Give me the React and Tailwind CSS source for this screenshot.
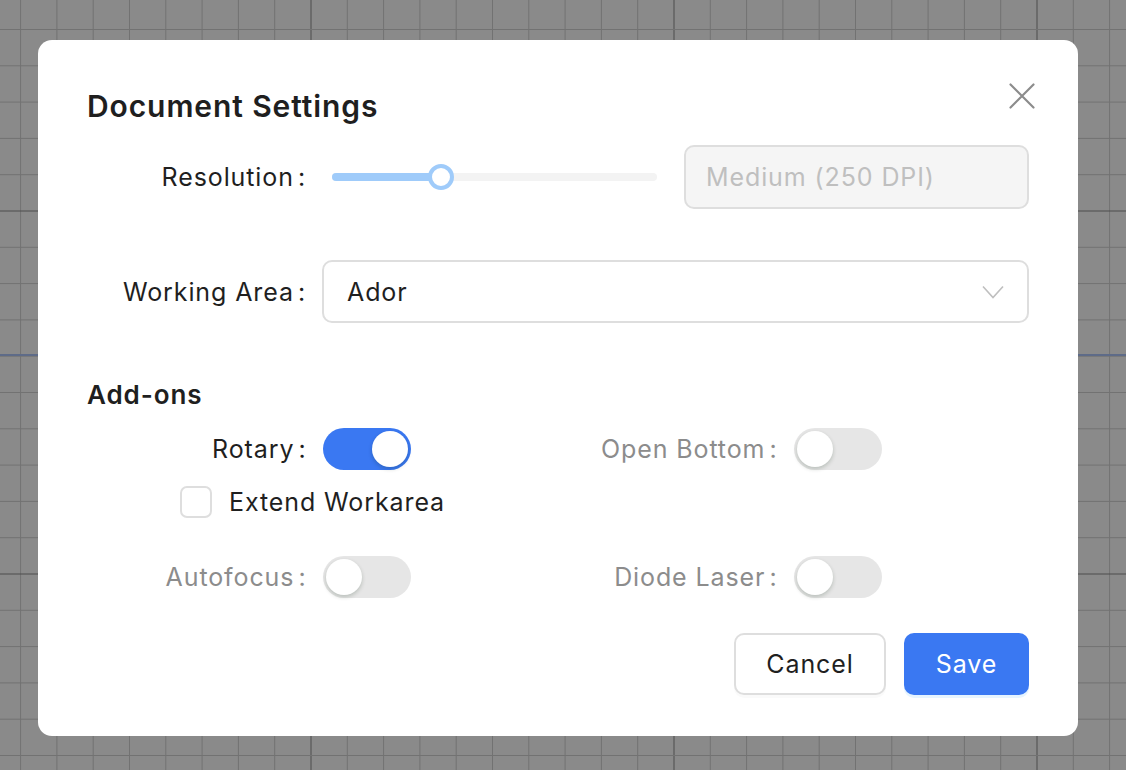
const STEP = 36.3

function GridCanvas() {
  const vertical = []
  for (let k = -9; k <= 23; k++) vertical.push({ x: 311 + k * STEP, major: k % 10 === 0 })
  const horizontal = []
  for (let k = -6; k <= 16; k++) horizontal.push({ y: 211 + k * STEP, major: k % 10 === 0 })
  return (
    <svg className="absolute inset-0" width="1126" height="770">
      <rect width="1126" height="770" fill="#8a8a8a" />
      {vertical.map((l) => (
        <line key={'v' + l.x} x1={l.x} x2={l.x} y1="0" y2="770" stroke={l.major ? '#4d4d4d' : '#727272'} strokeWidth="1" />
      ))}
      {horizontal.map((l) => (
        <line key={'h' + l.y} x1="0" x2="1126" y1={l.y} y2={l.y} stroke={l.major ? '#4d4d4d' : '#727272'} strokeWidth="1" />
      ))}
      <line x1="0" x2="1126" y1="355" y2="355" stroke="#5e6b88" strokeWidth="2" />
    </svg>
  )
}

function Label({ text, disabled, className = '' }) {
  return (
    <div className={`flex shrink-0 items-center justify-end pt-[2px] ${className} ${disabled ? 'text-[#8c8c8c]' : 'text-[#1f1f1f]'}`}>
      <span>{text}</span>
      <span className="ml-[4px] mr-[16px]">:</span>
    </div>
  )
}

function Toggle({ on }) {
  return (
    <div
      className={`flex h-[42px] w-[88px] items-center rounded-full px-[3px] ${on ? 'justify-end bg-[#3a78f2]' : 'justify-start bg-[#e6e6e6]'}`}
    >
      <div className="h-[36px] w-[36px] rounded-full bg-white shadow-[0_2px_4px_rgba(0,35,11,0.2)]" />
    </div>
  )
}

function Slider() {
  return (
    <div className="relative ml-[10px] flex h-[28px] w-[325px] items-center">
      <div className="h-[8px] w-full rounded-full bg-[#f3f3f3]" />
      <div className="absolute left-0 top-[10px] h-[8px] w-[109px] rounded-full bg-[#9fcbfa]" />
      <div className="absolute left-[96px] top-[1px] h-[26px] w-[26px] rounded-full border-[4px] border-[#9fcbfa] bg-white" />
    </div>
  )
}

export default function App() {
  return (
    <div className="relative h-[770px] w-[1126px] overflow-hidden font-['Inter',sans-serif] text-[25px] tracking-[0.9px] text-[#1f1f1f]">
      <GridCanvas />
      <div className="absolute left-[38px] top-[40px] flex h-[696px] w-[1040px] flex-col rounded-[14px] bg-white px-[49px] pt-[46px]">
        <button className="absolute right-[43px] top-[43px] text-[#8c8c8c]">
          <svg width="26" height="26" viewBox="0 0 26 26" fill="none" stroke="currentColor" strokeWidth="2.2" strokeLinecap="round">
            <path d="M1.5 1.5 L24.5 24.5 M24.5 1.5 L1.5 24.5" />
          </svg>
        </button>
        <div className="text-[30px] font-semibold leading-[40px] tracking-[0.9px]">Document Settings</div>

        <div className="mt-[19px] flex h-[64px] items-center">
          <Label text="Resolution" className="w-[235px]" />
          <Slider />
          <div className="ml-auto flex h-[64px] w-[345px] items-center rounded-[10px] border-2 border-[#dedede] bg-[#f5f5f5] px-[20px] pt-[2px] text-[#bfbfbf]">
            Medium (250 DPI)
          </div>
        </div>

        <div className="mt-[51px] flex h-[63px] items-center">
          <Label text="Working Area" className="w-[235px]" />
          <div className="flex h-[63px] flex-1 items-center justify-between rounded-[10px] border-2 border-[#dedede] bg-white pl-[23px] pr-[23px]">
            <span className="pt-[2px]">Ador</span>
            <svg width="22" height="14" viewBox="0 0 22 14" fill="none" stroke="#bfbfbf" strokeWidth="1.6">
              <path d="M1 1.5 L11 12.5 L21 1.5" />
            </svg>
          </div>
        </div>

        <div className="mt-[52px] text-[26px] font-semibold leading-[40px] tracking-[0.9px]">Add-ons</div>

        <div className="mt-[13px] grid grid-cols-2">
          <div className="flex h-[42px] items-center">
            <Label text="Rotary" className="w-1/2" />
            <Toggle on />
          </div>
          <div className="flex h-[42px] items-center">
            <Label text="Open Bottom" disabled className="w-1/2" />
            <Toggle />
          </div>
        </div>

        <div className="ml-[93px] mt-[16px] flex h-[32px] items-center">
          <div className="h-[32px] w-[32px] rounded-[7px] border-2 border-[#dedede] bg-white" />
          <span className="ml-[17px] pt-[2px]">Extend Workarea</span>
        </div>

        <div className="mt-[38px] grid grid-cols-2">
          <div className="flex h-[42px] items-center">
            <Label text="Autofocus" disabled className="w-1/2" />
            <Toggle />
          </div>
          <div className="flex h-[42px] items-center">
            <Label text="Diode Laser" disabled className="w-1/2" />
            <Toggle />
          </div>
        </div>

        <div className="mt-[35px] flex justify-end gap-[18px]">
          <button className="h-[62px] w-[152px] rounded-[10px] border-2 border-[#dedede] bg-white pt-[2px] shadow-[0_3px_0_rgba(0,0,0,0.02)]">
            Cancel
          </button>
          <button className="h-[62px] w-[125px] rounded-[10px] bg-[#3a78f2] pt-[2px] text-white shadow-[0_3px_0_rgba(5,145,255,0.1)]">
            Save
          </button>
        </div>
      </div>
    </div>
  )
}
